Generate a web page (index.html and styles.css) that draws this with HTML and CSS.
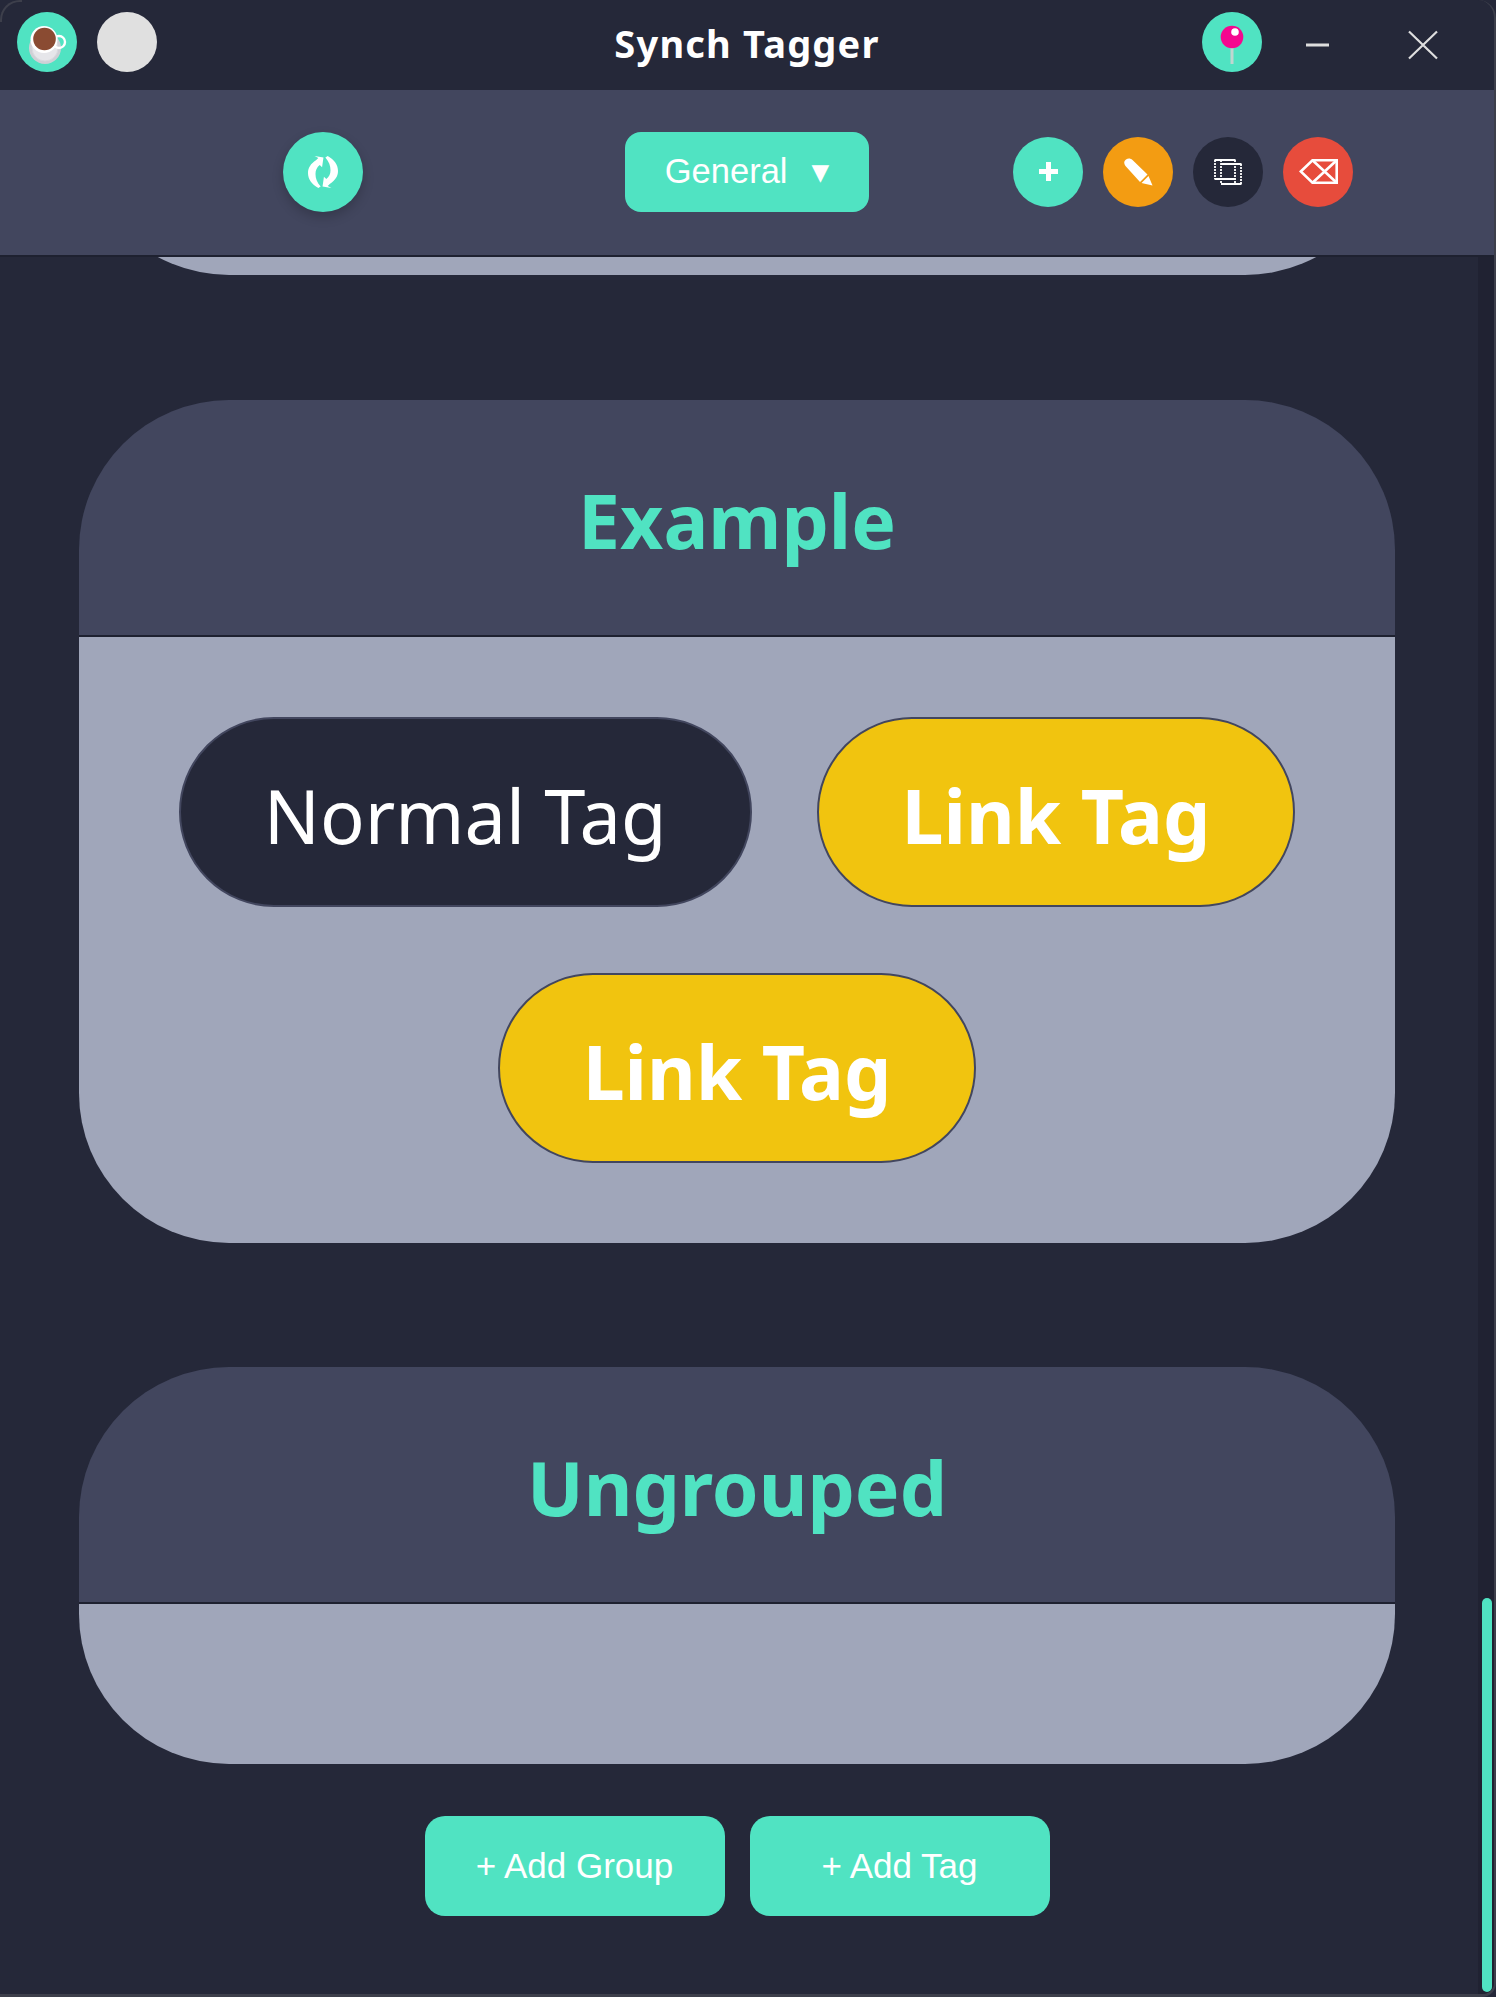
FILE: index.html
```html
<!DOCTYPE html>
<html>
<head>
  <meta charset="UTF-8">
  <meta name="viewport" content="width=device-width, initial-scale=1.0">
  <title>Synch Tagger</title>
  <link rel="stylesheet" href="styles.css">
</head>
<body>
  <div class="window">
    <div class="titlebar">
      <div class="titlebar-left">
        <button class="round-icon teal" aria-label="Buy me a coffee">
          <svg width="60" height="60" viewBox="0 0 60 60">
            <circle cx="28" cy="36" r="16" fill="#cfd0d6"/>
            <circle cx="28" cy="36" r="13" fill="#e6e6ea" stroke="#d9d9de"/>
            <circle cx="42" cy="30" r="6" fill="none" stroke="#fff" stroke-width="2.4"/>
            <circle cx="27" cy="27.5" r="13.5" fill="#fff"/>
            <circle cx="27.5" cy="27" r="11.3" fill="#8a4b32"/>
          </svg>
        </button>
        <button class="round-icon grey" aria-label="Profile"></button>
      </div>
      <h1 class="app-title">Synch Tagger</h1>
      <div class="titlebar-right">
        <button class="round-icon teal pin-button" aria-label="Pin">
          <svg width="60" height="60" viewBox="0 0 60 60">
            <rect x="28.5" y="34" width="3" height="18" fill="#bfd6d0"/>
            <circle cx="30" cy="25" r="11.3" fill="#f5078f"/>
            <circle cx="33" cy="20" r="3.8" fill="#fff"/>
          </svg>
        </button>
        <button class="window-button minimize" aria-label="Minimize">
          <svg width="23" height="4" viewBox="0 0 23 4"><rect y="0.5" width="23" height="3" fill="#dedede"/></svg>
        </button>
        <button class="window-button" aria-label="Close">
          <svg width="30" height="30" viewBox="0 0 30 30"><path d="M1 1.5 L29 28.5 M29 1.5 L1 28.5" stroke="#dedede" stroke-width="2.2" fill="none"/></svg>
        </button>
      </div>
    </div>

    <div class="toolbar">
      <button class="sync-button" aria-label="Sync">
        <svg width="30" height="34" viewBox="0 0 32 36">
          <path d="M11 2 L8.500 4.500 C3 8 0 12.500 0 18 C0 24.500 4 30 11 34 L13.500 32.500 C9.500 28 8 23.500 8 19 C8 15 9.500 12 12.500 9.500 L15 12 L16.500 1.500 L7 0 Z" fill="#fff" transform="translate(0,1)"/>
          <path d="M21 34 L23.500 31.500 C29 28 32 23.500 32 18 C32 11.500 28 6 21 2 L18.500 3.500 C22.500 8 24 12.500 24 17 C24 21 22.500 24 19.500 26.500 L17 24 L15.500 34.500 L25 36 Z" fill="#fff" transform="translate(0,-1)"/>
        </svg>
      </button>
      <button class="profile-select">General<span class="select-arrow">▼</span></button>
      <div class="actions">
        <button class="action teal" aria-label="Add">
          <svg width="19" height="19" viewBox="0 0 19 19"><path d="M7 0 H12 V7 H19 V12 H12 V19 H7 V12 H0 V7 H7 Z" fill="#fff"/></svg>
        </button>
        <button class="action orange" aria-label="Edit">
          <svg width="29" height="28" viewBox="0 0 29 28">
            <path d="M1.500 8 C-0.500 5.500 0 3 2 1.500 C4 0 6.500 0 8.500 2 L23.500 16.500 L16 24 Z" fill="#fff"/>
            <path d="M24.500 18 L28.500 27.500 L17.500 25 Z" fill="#fff"/>
          </svg>
        </button>
        <button class="action dark" aria-label="Copy">
          <svg width="28" height="26" viewBox="0 0 28 26" fill="none" stroke="#fff" stroke-width="1.800">
            <path d="M0.500 1 H21.500 M0.500 20 H21.500 M7 5 H27.500 M7 25 H27.500"/>
            <path d="M1 1 V20 M21 1 V25 M7 1 V25 M27 5 V25" stroke-dasharray="2 1"/>
          </svg>
        </button>
        <button class="action red" aria-label="Delete">
          <svg width="39" height="25" viewBox="0 0 39 25" fill="none" stroke="#fff" stroke-width="2.600">
            <path d="M1.800 12.500 L13.500 1.300 H37.700 V23.700 H13.500 Z"/>
            <path d="M13.500 1.300 L37.700 23.700 M37.700 1.300 L13.500 23.700"/>
          </svg>
        </button>
      </div>
    </div>

    <div class="content">
      <div class="main">
        <div class="group-tail"></div>

        <section class="group first-group">
          <div class="group-header">Example</div>
          <div class="group-body">
            <a class="tag">Normal Tag</a>
            <a class="tag link">Link Tag</a>
            <a class="tag link">Link Tag</a>
          </div>
        </section>

        <section class="group">
          <div class="group-header">Ungrouped</div>
          <div class="group-body"></div>
        </section>

        <div class="footer">
          <button class="add-button">+ Add Group</button>
          <button class="add-button">+ Add Tag</button>
        </div>
      </div>
      <div class="scroll-track"><div class="scroll-thumb"></div></div>
    </div>
  </div>
</body>
</html>
```

FILE: styles.css
```css
:root {
  --bg-color: #252839;
  --panel-color: #42465e;
  --body-color: #a0a6ba;
  --teal: #50e3c2;
  --line-color: #1e2130;
  --edge-color: #3d3f4b;
}

* {
  box-sizing: border-box;
}

html, body {
  margin: 0;
  height: 100%;
  background: var(--bg-color);
}

button {
  border: none;
  padding: 0;
  color: white;
  cursor: pointer;
  background: none;
  display: flex;
  align-items: center;
  justify-content: center;
}

.window {
  position: relative;
  width: 1496px;
  height: 1997px;
  display: flex;
  flex-direction: column;
  overflow: hidden;
  background: var(--bg-color);
  border-right: 2px solid var(--edge-color);
  border-bottom: 3px solid var(--edge-color);
  border-bottom-right-radius: 14px;
  border-top-right-radius: 18px;
}

/* faint rounded corner of the window frame */
.window::before {
  content: "";
  position: absolute;
  top: 0;
  left: 0;
  width: 20px;
  height: 20px;
  border-top: 2px solid var(--edge-color);
  border-left: 2px solid var(--edge-color);
  border-top-left-radius: 20px;
}

.titlebar {
  height: 90px;
  flex-shrink: 0;
  display: grid;
  grid-template-columns: 1fr auto 1fr;
  align-items: start;
  padding-top: 12px;
}

.titlebar-left {
  display: flex;
  gap: 20px;
  padding-left: 17px;
}

.titlebar-right {
  display: flex;
  justify-content: flex-end;
  padding-right: 24px;
}

.round-icon {
  width: 60px;
  height: 60px;
  border-radius: 50%;
}

.round-icon.teal { background: var(--teal); }
.round-icon.grey { background: #e0e0e0; }

.pin-button {
  margin-right: 8px;
}

.window-button {
  width: 95px;
  height: 66px;
}

.window-button.minimize {
  margin-right: 10px;
}

.app-title {
  margin: 0;
  height: 66px;
  line-height: 62px;
  font-family: "Noto Sans", sans-serif;
  font-size: 38px;
  font-weight: 700;
  letter-spacing: 1.2px;
  color: white;
}

.toolbar {
  height: 167px;
  flex-shrink: 0;
  display: flex;
  align-items: center;
  padding: 0 0 2px 283px;
  background: var(--panel-color);
  border-bottom: 2px solid var(--line-color);
}

.sync-button {
  width: 80px;
  height: 80px;
  border-radius: 50%;
  background: var(--teal);
  box-shadow: 0 5px 12px rgba(0, 0, 0, 0.2);
}

.profile-select {
  width: 244px;
  height: 80px;
  margin: 0 144px 0 262px;
  border-radius: 16px;
  background: var(--teal);
  font-family: "Liberation Sans", sans-serif;
  font-size: 34.5px;
}

.select-arrow {
  margin-left: 24px;
  font-family: "DejaVu Sans", sans-serif;
  font-size: 23px;
}

.actions {
  display: flex;
  gap: 20px;
}

.action {
  width: 70px;
  height: 70px;
  border-radius: 50%;
}

.action.teal { background: var(--teal); }
.action.orange { background: #f39c12; }
.action.dark { background: var(--bg-color); }
.action.red { background: #e74c3c; }

.content {
  flex: 1;
  min-height: 0;
  display: flex;
}

.main {
  flex: 1;
  min-width: 0;
  overflow: hidden;
  padding: 0 83px 0 79px;
  display: flex;
  flex-direction: column;
  gap: 124px;
}

/* bottom of the group scrolled away under the toolbar */
.group-tail {
  height: 150px;
  flex-shrink: 0;
  margin-top: -132px;
  background: var(--body-color);
  border-radius: 0 0 150px 150px;
}

.group {
  flex-shrink: 0;
  border-radius: 150px;
  overflow: hidden;
}

.first-group {
  margin-top: 1px;
}

.group-header {
  height: 237px;
  padding-top: 4px;
  display: flex;
  align-items: center;
  justify-content: center;
  background: var(--panel-color);
  border-bottom: 2px solid var(--line-color);
  font-family: "Noto Sans", sans-serif;
  font-size: 75px;
  font-weight: 700;
  color: var(--teal);
}

.group-body {
  padding: 80px;
  min-height: 160px;
  display: flex;
  flex-wrap: wrap;
  justify-content: center;
  gap: 66px 65px;
  background: var(--body-color);
}

.tag {
  height: 190px;
  padding: 6px 83px 0;
  display: flex;
  align-items: center;
  border: 2px solid var(--panel-color);
  border-radius: 95px;
  background: var(--bg-color);
  font-family: "Noto Sans", sans-serif;
  font-size: 74px;
  color: white;
}

.tag.link {
  background: #f1c40f;
  font-size: 75px;
  font-weight: 700;
}

.footer {
  display: flex;
  justify-content: center;
  gap: 25px;
  margin-top: -72px;
}

.add-button {
  width: 300px;
  height: 100px;
  border-radius: 20px;
  background: var(--teal);
  font-family: "Liberation Sans", sans-serif;
  font-size: 35px;
}

.scroll-track {
  width: 16px;
  flex-shrink: 0;
  padding: 1341px 2px 2px 4px;
  background: #202232;
}

.scroll-thumb {
  height: 100%;
  border-radius: 5px;
  background: var(--teal);
}
```
